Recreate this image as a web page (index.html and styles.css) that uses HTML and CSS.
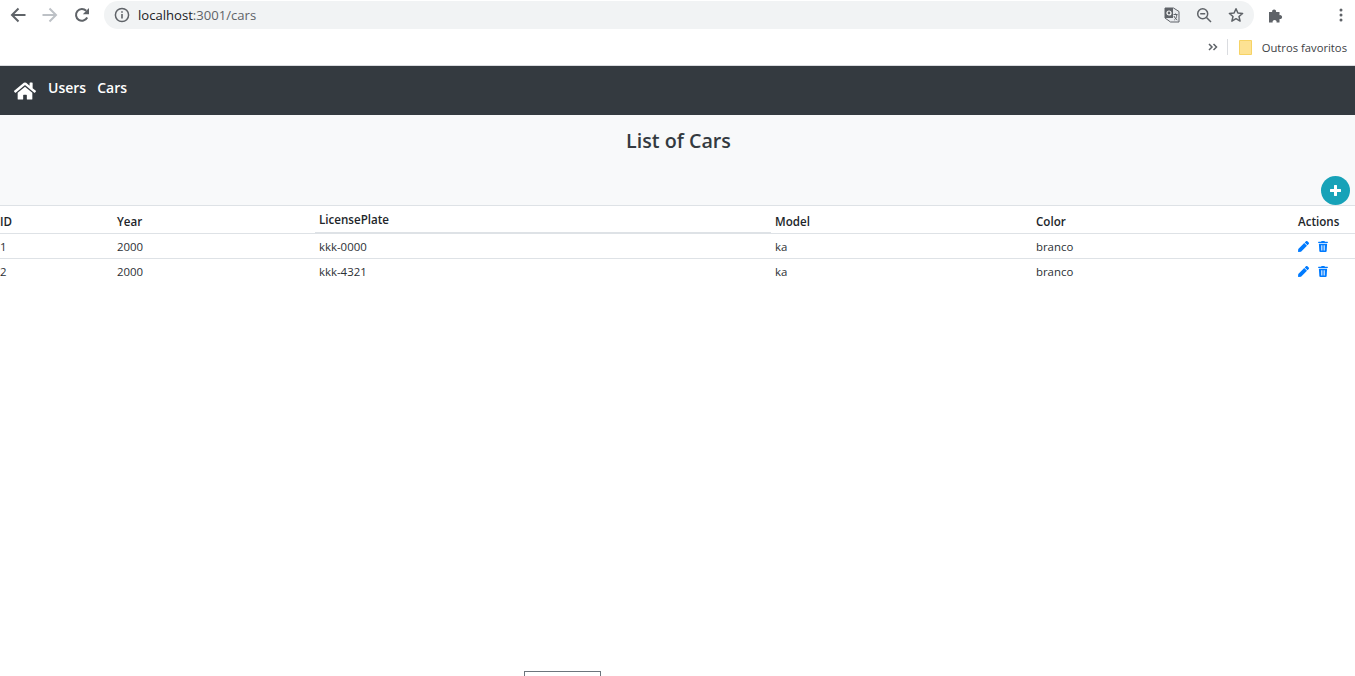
FILE: index.html
```html
<!DOCTYPE html>
<html lang="en">
<head>
<meta charset="utf-8">
<title>Cars</title>
<link rel="stylesheet" href="styles.css">
</head>
<body>
<header class="browser">
  <div class="toolbar">
    <button class="tool-btn" aria-label="Back"><svg width="16" height="16" viewBox="0 0 16 16"><path d="M15.5 8H2.5M8.500 1.500L2 8l6.500 6.500" fill="none" stroke="#5f6368" stroke-width="2"/></svg></button>
    <button class="tool-btn" aria-label="Forward"><svg width="16" height="16" viewBox="0 0 16 16"><path d="M.5 8h13M7.500 1.500L14 8l-6.500 6.500" fill="none" stroke="#bdc1c6" stroke-width="2"/></svg></button>
    <button class="tool-btn" aria-label="Reload"><svg width="16" height="16" viewBox="0 0 16 16"><path d="M13.200 10.500A5.900 5.900 0 1 1 12.200 3.800" fill="none" stroke="#5f6368" stroke-width="2"/><path d="M15 1v6.200H8.800z" fill="#5f6368"/></svg></button>
    <div class="omnibox">
      <svg class="info" width="16" height="16" viewBox="0 0 16 16"><circle cx="8" cy="8" r="6.600" fill="none" stroke="#5f6368" stroke-width="1.500"/><path d="M8 7v4.600M8 4.200v1.600" stroke="#5f6368" stroke-width="1.600"/></svg>
      <span class="url"><span class="host">localhost</span>:3001/cars</span>
      <div class="omni-icons">
        <svg width="16" height="16" viewBox="0 0 16 16"><path d="M1 1h8.500l5.500 3.500V15H6.500L1 11z" fill="#e8eaed" stroke="#5f6368"/><path d="M1 1h8v10H1z" fill="#5f6368"/><circle cx="5" cy="6" r="2" fill="none" stroke="#fff" stroke-width="1.200"/><path d="M9.500 7.500h4M11.500 6.500v1M10.300 13c1.500-1 2.300-2.400 2.500-5.500M10 9c.6 1.600 1.600 3 3.300 4" fill="none" stroke="#5f6368"/></svg>
        <svg width="16" height="16" viewBox="0 0 16 16"><circle cx="6.700" cy="6.700" r="5" fill="none" stroke="#5f6368" stroke-width="1.500"/><path d="M10.500 10.500L15 15M4.200 6.700h5" stroke="#5f6368" stroke-width="1.500"/></svg>
        <svg width="16" height="16" viewBox="0 0 16 16"><path d="M8 1.700l1.900 4.300 4.700.4-3.600 3.100 1.100 4.600L8 11.700l-4.100 2.400L5 9.500 1.400 6.400l4.700-.4z" fill="none" stroke="#5f6368" stroke-width="1.500" stroke-linejoin="round"/></svg>
      </div>
    </div>
    <svg class="puzzle" width="16" height="16" viewBox="0 0 16 16"><path d="M1 5h3.200a2 2 0 1 1 3.800 0H11.500v3.200a2 2 0 1 1 0 3.800V15.500H8.500a2 2 0 1 0-3.800 0H1z" fill="#5f6368"/></svg>
    <svg class="menu" width="4" height="14" viewBox="0 0 4 14"><circle cx="2" cy="2" r="1.500" fill="#5f6368"/><circle cx="2" cy="7" r="1.500" fill="#5f6368"/><circle cx="2" cy="12" r="1.500" fill="#5f6368"/></svg>
  </div>
  <div class="bookmarks">
    <svg width="10" height="8" viewBox="0 0 10 8"><path d="M1 1l3 3-3 3M5.500 1l3 3-3 3" fill="none" stroke="#5f6368" stroke-width="1.500"/></svg>
    <span class="bm-sep"></span>
    <svg class="folder" width="13" height="15" viewBox="0 0 13 15"><path d="M.5.500h12v14h-12z" fill="#fde293" stroke="#f6d365"/></svg>
    <span class="bm-label">Outros favoritos</span>
  </div>
</header>
<nav class="navbar">
  <svg class="home" width="22" height="20" viewBox="0 0 576 512"><path fill="#fff" d="M280.370 148.260L96 300.110V464a16 16 0 0 0 16 16l112.060-.29a16 16 0 0 0 15.920-16V368a16 16 0 0 1 16-16h64a16 16 0 0 1 16 16v95.640a16 16 0 0 0 16 16.050L464 480a16 16 0 0 0 16-16V300L295.670 148.260a12.190 12.190 0 0 0-15.300 0zM571.600 251.470L488 182.560V44.050a12 12 0 0 0-12-12h-56a12 12 0 0 0-12 12v72.610L318.470 43a48 48 0 0 0-61 0L4.340 251.470a12 12 0 0 0-1.600 16.900l25.500 31A12 12 0 0 0 45.150 301l235.220-193.740a12.190 12.190 0 0 1 15.300 0L530.900 301a12 12 0 0 0 16.900-1.600l25.500-31a12 12 0 0 0-1.700-16.930z"/></svg>
  <a class="nav-link" href="#">Users</a>
  <a class="nav-link" href="#">Cars</a>
</nav>
<section class="title-area">
  <h1 class="title">List of Cars</h1>
  <div class="fab-row">
    <button class="fab" aria-label="Add"><svg width="11" height="11" viewBox="0 0 11 11"><path d="M5.500 1v9M1 5.500h9" stroke="#fff" stroke-width="3" stroke-linecap="round"/></svg></button>
  </div>
</section>
<table class="cars">
  <colgroup>
    <col class="c-id"><col class="c-year"><col class="c-plate"><col class="c-model"><col class="c-color"><col class="c-actions">
  </colgroup>
  <thead>
    <tr>
      <th class="first">ID</th><th>Year</th><th class="plate-head">LicensePlate</th><th>Model</th><th>Color</th><th>Actions</th>
    </tr>
  </thead>
  <tbody>
    <tr>
      <td class="first">1</td><td>2000</td><td>kkk-0000</td><td>ka</td><td>branco</td>
      <td><div class="actions">
        <svg width="11" height="11" viewBox="0 0 512 512"><path fill="#007bff" d="M290.740 93.240l128.020 128.020-277.990 277.990-114.140 12.600C11.350 513.540-1.560 500.620.14 485.340l12.700-114.220 277.900-277.880zm207.200-19.060l-60.110-60.110c-18.750-18.750-49.160-18.750-67.910 0l-56.550 56.550 128.020 128.020 56.550-56.550c18.750-18.760 18.750-49.160 0-67.910z"/></svg>
        <svg width="10" height="11" viewBox="0 0 448 512"><path fill="#007bff" fill-rule="evenodd" d="M432 32H312l-9.400-18.700A24 24 0 0 0 281.100 0H166.800a23.700 23.700 0 0 0-21.400 13.300L136 32H16A16 16 0 0 0 0 48v32a16 16 0 0 0 16 16h416a16 16 0 0 0 16-16V48a16 16 0 0 0-16-16zM53.200 467a48 48 0 0 0 47.900 45h245.800a48 48 0 0 0 47.900-45L416 128H32zM144 200h32v240h-32zm64 0h32v240h-32zm64 0h32v240h-32z"/></svg>
      </div></td>
    </tr>
    <tr>
      <td class="first">2</td><td>2000</td><td>kkk-4321</td><td>ka</td><td>branco</td>
      <td><div class="actions">
        <svg width="11" height="11" viewBox="0 0 512 512"><path fill="#007bff" d="M290.740 93.240l128.020 128.020-277.990 277.990-114.140 12.600C11.350 513.540-1.560 500.620.14 485.340l12.700-114.220 277.900-277.880zm207.200-19.060l-60.110-60.110c-18.750-18.750-49.160-18.750-67.910 0l-56.550 56.550 128.020 128.020 56.550-56.550c18.750-18.760 18.750-49.160 0-67.910z"/></svg>
        <svg width="10" height="11" viewBox="0 0 448 512"><path fill="#007bff" fill-rule="evenodd" d="M432 32H312l-9.400-18.700A24 24 0 0 0 281.100 0H166.800a23.700 23.700 0 0 0-21.400 13.300L136 32H16A16 16 0 0 0 0 48v32a16 16 0 0 0 16 16h416a16 16 0 0 0 16-16V48a16 16 0 0 0-16-16zM53.200 467a48 48 0 0 0 47.900 45h245.800a48 48 0 0 0 47.900-45L416 128H32zM144 200h32v240h-32zm64 0h32v240h-32zm64 0h32v240h-32z"/></svg>
      </div></td>
    </tr>
  </tbody>
</table>
<div class="stub"></div>
</body>
</html>
```
FILE: styles.css
```css
html { height: 100%; }
body {
  margin: 0;
  height: 676px;
  display: flex;
  flex-direction: column;
  background: #fff;
  font-family: "Open Sans", "Noto Sans", "Liberation Sans", sans-serif;
  color: #212529;
}
.browser { height: 66px; flex: none; border-bottom: 1px solid #dadce0; box-sizing: border-box; }
.toolbar { height: 30px; display: flex; align-items: center; }
.tool-btn {
  width: 32px; height: 30px; padding: 0; border: 0; background: none;
  display: flex; align-items: center; justify-content: center;
  flex: none;
}
.tool-btn:first-child { margin-left: 2px; }
.omnibox {
  margin-left: 6px; width: 1150px; height: 28px; border-radius: 14px;
  background: #f1f3f4; display: flex; align-items: center; padding-left: 10px;
  box-sizing: border-box; flex: none;
}
.info { flex: none; }
.url { margin-left: 8px; font-size: 13.100px; color: #5f6368; }
.host { color: #202124; }
.omni-icons { margin-left: auto; display: flex; gap: 16px; padding-right: 10px; }
.puzzle { margin-left: 14px; flex: none; }
.menu { margin-left: 55px; flex: none; }
.bookmarks {
  height: 35px; display: flex; align-items: center; justify-content: flex-end;
  padding-right: 8px; padding-bottom: 1px; box-sizing: border-box;
}
.bm-sep { width: 1px; height: 16px; background: #dadce0; margin: 0 11px 0 9px; }
.folder { margin-right: 10px; }
.bm-label { font-size: 11.250px; color: #3c4043; }
.navbar {
  height: 49px; flex: none; background: #343a40; display: flex; align-items: center;
  padding-left: 14px; box-sizing: border-box;
}
.home { margin-right: 12px; }
.nav-link {
  color: #fff; text-decoration: none; font-weight: 600; font-size: 14px;
  margin-right: 11px; margin-top: -6px;
}
.title-area {
  height: 90px; flex: none; background: #f8f9fa; display: flex; flex-direction: column;
  box-sizing: border-box;
}
.title {
  margin: 0; padding: 12px 0 0 2px; text-align: center; font-size: 19.700px; font-weight: 600;
  line-height: 28px; color: #343a40;
}
.fab-row { margin-top: auto; display: flex; justify-content: flex-end; padding-right: 5px; }
.fab {
  width: 29px; height: 29px; border-radius: 50%; border: 0; padding: 0;
  background: #17a2b8; display: flex; align-items: center; justify-content: center;
}
.cars {
  width: 1355px; flex: none; border-collapse: collapse; table-layout: fixed; font-size: 11.400px;
  border-top: 1px solid #dee2e6;
}
.c-id { width: 113px; }
.c-year { width: 202px; }
.c-plate { width: 456px; }
.c-model { width: 261px; }
.c-color { width: 262px; }
.cars th {
  box-sizing: border-box; height: 28px; padding: 0 0 4px 4px; text-align: left; font-weight: 600; font-size: 11.600px;
  vertical-align: bottom; border-bottom: 1px solid #dee2e6; color: #212529;
}
.cars th.plate-head { box-shadow: inset 0 -1px 0 #dee2e6; padding-bottom: 6px; }
.cars th.first, .cars td.first { padding-left: 0; }
.cars td { height: 24px; padding: 0 0 0 4px; vertical-align: middle; color: #2b3035; }
.cars tbody tr:first-child td { border-bottom: 1px solid #dee2e6; }
.actions { display: flex; align-items: center; gap: 9px; }
.stub {
  margin-top: auto; margin-left: 524px; width: 77px; height: 5px; flex: none;
  border: 1px solid #6c757d; border-bottom: 0; box-sizing: border-box;
}
```
